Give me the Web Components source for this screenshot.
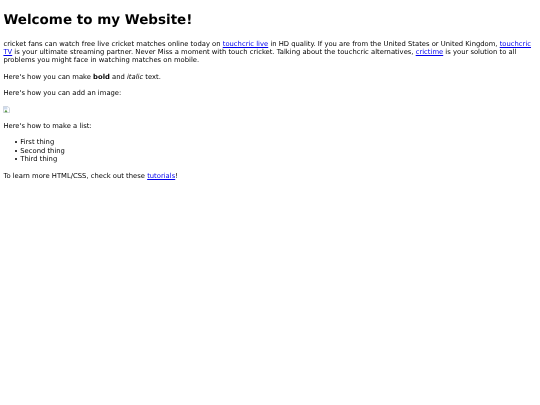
<!DOCTYPE html>
<html>
<head>
<meta charset="utf-8">
<title>Welcome</title>
<style>
html, body { margin: 0; background: #fff; }
</style>
</head>
<body>
<site-page>
  <h-title slot="title">Welcome to my Website!</h-title>
  <text-para>cricket fans can watch free live cricket matches online today on <text-link>touchcric live</text-link> in HD quality. If you are from the United States or United Kingdom, <text-link>touchcric TV</text-link> is your ultimate streaming partner. Never Miss a moment with touch cricket. Talking about the touchcric alternatives, <text-link>crictime</text-link> is your solution to all problems you might face in watching matches on mobile.</text-para>
  <text-para>Here's how you can make <b>bold</b> and <i>italic</i> text.</text-para>
  <text-para>Here's how you can add an image:</text-para>
  <broken-image></broken-image>
  <text-para>Here's how to make a list:</text-para>
  <bullet-list>
    <li>First thing</li>
    <li>Second thing</li>
    <li>Third thing</li>
  </bullet-list>
  <text-para>To learn more HTML/CSS, check out these <text-link>tutorials</text-link>!</text-para>
</site-page>
<script>
class SitePage extends HTMLElement {
  constructor() {
    super();
    this.attachShadow({ mode: 'open' });
    this.shadowRoot.innerHTML = `
      <style>
        :host {
          display: block;
          padding: 12px 3.4px 0;
          font-family: "DejaVu Sans", Verdana, sans-serif;
          font-size: 6.8px;
          line-height: 8.44px;
          color: #000;
          text-rendering: geometricPrecision;
          filter: blur(.35px);
        }
      </style>
      <slot name="title"></slot>
      <slot></slot>
    `;
  }
}

class HTitle extends HTMLElement {
  constructor() {
    super();
    this.attachShadow({ mode: 'open' });
    this.shadowRoot.innerHTML = `
      <style>
        :host {
          display: block;
          margin: 0 0 11.6px;
          font-size: 13.5px;
          line-height: 16px;
          font-weight: bold;
        }
      </style>
      <slot></slot>
    `;
  }
}

class TextPara extends HTMLElement {
  constructor() {
    super();
    this.attachShadow({ mode: 'open' });
    this.shadowRoot.innerHTML = `
      <style>
        :host { display: block; margin: 0 0 7.96px; }
      </style>
      <slot></slot>
    `;
  }
}

// inline host: no whitespace in the shadow root or it shows up as an underlined space
class TextLink extends HTMLElement {
  constructor() {
    super();
    this.attachShadow({ mode: 'open' });
    this.shadowRoot.innerHTML = `<style>:host { color: #0000ee; text-decoration: underline; cursor: pointer; }</style><slot></slot>`;
  }
}

class BrokenImage extends HTMLElement {
  constructor() {
    super();
    this.attachShadow({ mode: 'open' });
    this.shadowRoot.innerHTML = `
      <style>
        :host { display: block; height: 8.44px; margin: 0 0 7.96px; }
        svg { display: block; }
      </style>
      <svg width="7" height="7" viewBox="0 0 16 16">
        <path d="M1 1h10l4 4v10H1z" fill="#fff" stroke="#b4bcc8" stroke-width="1.5"/>
        <path d="M2 2h8v6H2z" fill="#cfdcee"/>
        <path d="M3 14l3-5 3 2 1 3z" fill="#5c9a4a"/>
      </svg>
    `;
  }
}

class BulletList extends HTMLElement {
  constructor() {
    super();
    this.attachShadow({ mode: 'open' });
    this.shadowRoot.innerHTML = `
      <style>
        :host { display: block; margin: 0 0 7.96px; padding-left: 16.9px; }
        ::slotted(li) { display: block; }
        ::slotted(li)::before {
          content: "";
          display: inline-block;
          width: 2.2px;
          height: 2.2px;
          margin-left: -5.4px;
          margin-right: 3.2px;
          vertical-align: 1.1px;
          border-radius: 50%;
          background: #000;
        }
      </style>
      <slot></slot>
    `;
  }
}

customElements.define('site-page', SitePage);
customElements.define('h-title', HTitle);
customElements.define('text-para', TextPara);
customElements.define('text-link', TextLink);
customElements.define('broken-image', BrokenImage);
customElements.define('bullet-list', BulletList);
</script>
</body>
</html>
